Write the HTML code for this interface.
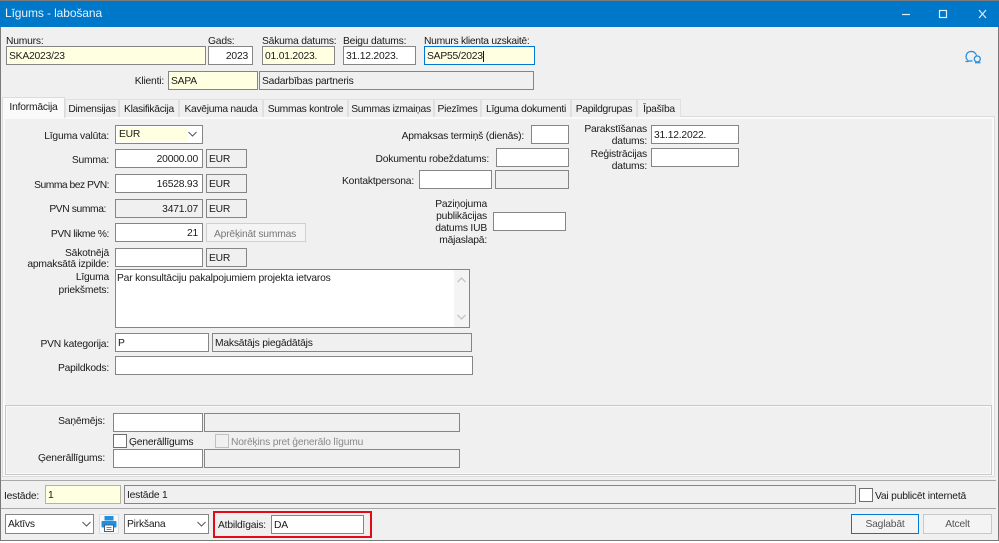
<!DOCTYPE html>
<html><head><meta charset="utf-8">
<style>
html,body{margin:0;padding:0;width:999px;height:543px;overflow:hidden;background:#fff}
body{position:relative;font:10.3px/15px "Liberation Sans",sans-serif;letter-spacing:-.2px;color:#1a1a1a}
div{position:absolute;box-sizing:border-box;white-space:nowrap}
.l{text-align:right}
.b{border:1px solid #858585;background:#fff;padding:3px 2px 1px;line-height:14px}
.g{background:#f0f0f0}
.y{background:#ffffe1}
.r{text-align:right;padding-right:4px}
.t{top:99px;height:18px;background:#f0f0f0;border:1px solid #e0e0e0;border-bottom:0;padding:2px 0 0 0;text-align:center;letter-spacing:-.3px}
.c{border:1px solid #6e6e6e;background:#fff;width:14px;height:14px}
</style></head><body>
<div style="left:0;top:0;width:999px;height:541px;background:#f0f0f0;border:1px solid #7a7a7a"></div>
<div style="left:0;top:0;width:999px;height:27px;background:#0078c9;border-top:1px solid #7a7a7a"></div>
<div style="left:5px;top:6px;color:#e6f2fb;font-size:12px;line-height:15px;letter-spacing:-.1px">Līgums - labošana</div>
<svg style="position:absolute;left:895px;top:5px" width="104" height="20" fill="none" stroke="#dcecf8" stroke-width="1.2">
<path d="M7 9.5h8"/><rect x="44.5" y="5.5" width="7" height="7"/><path d="M84 5l7 8M91 5l-7 8"/></svg>

<div style="left:6px;top:34px">Numurs:</div>
<div class="b y" style="left:6px;top:46px;width:200px;height:19px">SKA2023/23</div>
<div style="left:208px;top:34px">Gads:</div>
<div class="b r" style="left:208px;top:46px;width:45px;height:19px">2023</div>
<div style="left:262px;top:34px">Sākuma datums:</div>
<div class="b y" style="left:262px;top:46px;width:73px;height:19px">01.01.2023.</div>
<div style="left:343px;top:34px">Beigu datums:</div>
<div class="b" style="left:343px;top:46px;width:73px;height:19px">31.12.2023.</div>
<div style="left:424px;top:34px;letter-spacing:-.28px">Numurs klienta uzskaitē:</div>
<div class="b y" style="left:424px;top:46px;width:111px;height:19px;border-color:#0078d7;padding-left:2px">SAP55/2023<span style="border-left:1px solid #111"></span></div>
<div class="l" style="left:100px;width:64px;top:74px">Klienti:</div>
<div class="b y" style="left:168px;top:71px;width:90px;height:19px">SAPA</div>
<div class="b g" style="left:259px;top:71px;width:275px;height:19px">Sadarbības partneris</div>
<svg style="position:absolute;left:964px;top:48px" width="18" height="17" fill="none" stroke="#2b8fdc" stroke-width="1.3">
<path d="M4 12.5C2 11 1.8 8.5 2.5 6.5 3.5 3.5 8 2.5 10.5 4.5c1.2 1 1.8 2 1.9 3"/><path d="M1.5 13.5h2.5l.5-1"/><path d="M4.5 13h4"/><circle cx="13.3" cy="11" r="3"/><path d="M11 14.7h5.5"/></svg>

<!-- panel -->
<div style="left:2px;top:116px;width:993px;height:361px;background:#f0f0f0;border:1px solid #dcdcdc;box-shadow:inset 0 0 0 2px #fafafa"></div>
<div class="t" style="left:65px;width:54px">Dimensijas</div>
<div class="t" style="left:119px;width:60px">Klasifikācija</div>
<div class="t" style="left:179px;width:84px">Kavējuma nauda</div>
<div class="t" style="left:263px;width:85px">Summas kontrole</div>
<div class="t" style="left:348px;width:86px">Summas izmaiņas</div>
<div class="t" style="left:434px;width:47px">Piezīmes</div>
<div class="t" style="left:481px;width:90px">Līguma dokumenti</div>
<div class="t" style="left:571px;width:66px">Papildgrupas</div>
<div class="t" style="left:637px;width:44px">Īpašība</div>
<div style="left:2px;top:97px;width:63px;height:21px;background:#fafafa;border:1px solid #dcdcdc;border-bottom:0;padding:2px 0 0 0;text-align:center">Informācija</div>

<!-- left column -->
<div class="l" style="left:10px;width:99px;top:129px">Līguma valūta:</div>
<div class="b" style="left:115px;top:125px;width:88px;height:19px"><div class="y" style="left:1px;top:1px;width:70px;height:15px;padding:1px 0 0 2px;line-height:14px">EUR</div>
<svg style="position:absolute;left:71px;top:4px" width="12" height="9" fill="none" stroke="#555"><path d="M1.5 2l4 4 4-4"/></svg></div>
<div class="l" style="left:10px;width:99px;top:153px">Summa:</div>
<div class="b r" style="left:115px;top:149px;width:88px;height:19px">20000.00</div>
<div class="b g" style="left:206px;top:149px;width:41px;height:19px">EUR</div>
<div class="l" style="left:10px;width:99px;top:178px;letter-spacing:-.5px">Summa bez PVN:</div>
<div class="b r" style="left:115px;top:174px;width:88px;height:19px">16528.93</div>
<div class="b g" style="left:206px;top:174px;width:41px;height:19px">EUR</div>
<div class="l" style="left:10px;width:96px;top:202px;letter-spacing:-.4px">PVN summa:</div>
<div class="b r g" style="left:115px;top:199px;width:88px;height:19px">3471.07</div>
<div class="b g" style="left:206px;top:199px;width:41px;height:19px">EUR</div>
<div class="l" style="left:10px;width:99px;top:227px;letter-spacing:-.4px">PVN likme %:</div>
<div class="b r" style="left:115px;top:223px;width:88px;height:19px">21</div>
<div style="left:206px;top:223px;width:100px;height:19px;border:1px solid #d0d0d0;background:#f4f4f4;color:#777;padding:3px 0 0 7px">Aprēķināt summas</div>
<div class="l" style="left:10px;width:99px;top:246px">Sākotnējā</div>
<div class="l" style="left:10px;width:99px;top:257px">apmaksātā izpilde:</div>
<div class="b" style="left:115px;top:248px;width:88px;height:19px"></div>
<div class="b g" style="left:206px;top:248px;width:41px;height:19px">EUR</div>
<div class="l" style="left:10px;width:99px;top:270px">Līguma</div>
<div class="l" style="left:10px;width:99px;top:283px">priekšmets:</div>
<div class="b" style="left:115px;top:269px;width:355px;height:59px;padding:2px 1px"><div style="left:338px;top:0;width:15px;height:57px;background:#f4f4f4"></div>
<svg style="position:absolute;left:339px;top:3px" width="13" height="52" fill="none" stroke="#c4c4c4" stroke-width="1.3"><path d="M2.5 9l4-4 4 4M2.5 42l4 4 4-4"/></svg>Par konsultāciju pakalpojumiem projekta ietvaros</div>
<div class="l" style="left:10px;width:99px;top:337px">PVN kategorija:</div>
<div class="b" style="left:115px;top:333px;width:94px;height:19px">P</div>
<div class="b g" style="left:212px;top:333px;width:260px;height:19px">Maksātājs piegādātājs</div>
<div class="l" style="left:10px;width:99px;top:361px">Papildkods:</div>
<div class="b" style="left:115px;top:356px;width:358px;height:19px"></div>

<!-- right columns -->
<div class="l" style="left:380px;width:144px;top:129px">Apmaksas termiņš (dienās):</div>
<div class="b" style="left:531px;top:125px;width:38px;height:19px"></div>
<div class="l" style="left:350px;width:139px;top:152px">Dokumentu robeždatums:</div>
<div class="b" style="left:496px;top:148px;width:73px;height:19px"></div>
<div class="l" style="left:320px;width:94px;top:174px">Kontaktpersona:</div>
<div class="b" style="left:419px;top:170px;width:73px;height:19px"></div>
<div class="b g" style="left:495px;top:170px;width:74px;height:19px"></div>
<div class="l" style="left:410px;width:77px;top:197px">Paziņojuma</div>
<div class="l" style="left:410px;width:77px;top:209px">publikācijas</div>
<div class="l" style="left:410px;width:77px;top:221px">datums IUB</div>
<div class="l" style="left:410px;width:77px;top:233px">mājaslapā:</div>
<div class="b" style="left:493px;top:212px;width:73px;height:19px"></div>
<div class="l" style="left:570px;width:77px;top:122px">Parakstīšanas</div>
<div class="l" style="left:570px;width:77px;top:134px">datums:</div>
<div class="b" style="left:651px;top:125px;width:88px;height:19px">31.12.2022.</div>
<div class="l" style="left:570px;width:77px;top:147px">Reģistrācijas</div>
<div class="l" style="left:570px;width:77px;top:159px">datums:</div>
<div class="b" style="left:651px;top:148px;width:88px;height:19px"></div>

<!-- group -->
<div style="left:5px;top:405px;width:987px;height:70px;border:1px solid #c8c8c8;box-shadow:inset 0 0 0 1px #fafafa"></div>
<div class="l" style="left:10px;width:95px;top:414px">Saņēmējs:</div>
<div class="b" style="left:113px;top:413px;width:90px;height:19px"></div>
<div class="b g" style="left:204px;top:413px;width:256px;height:19px"></div>
<div class="c" style="left:113px;top:434px"></div>
<div style="left:129px;top:435px">Ģenerāllīgums</div>
<div class="c" style="left:215px;top:434px;border-color:#c0c0c0;background:#f0f0f0"></div>
<div style="left:231px;top:435px;color:#8a8a8a">Norēķins pret ģenerālo līgumu</div>
<div class="l" style="left:10px;width:95px;top:451px">Ģenerāllīgums:</div>
<div class="b" style="left:113px;top:449px;width:90px;height:19px"></div>
<div class="b g" style="left:204px;top:449px;width:256px;height:19px"></div>

<div style="left:1px;top:480px;width:995px;height:1px;background:#a8a8a8"></div>
<div style="left:4px;top:489px">Iestāde:</div>
<div class="b y" style="left:45px;top:485px;width:76px;height:19px;border-color:#b4b4a0">1</div>
<div class="b g" style="left:124px;top:485px;width:732px;height:19px">Iestāde 1</div>
<div class="c" style="left:859px;top:488px"></div>
<div style="left:875px;top:489px">Vai publicēt internetā</div>
<div style="left:1px;top:508px;width:995px;height:1px;background:#a8a8a8"></div>

<!-- bottom -->
<div class="b" style="left:5px;top:514px;width:89px;height:20px">Aktīvs
<svg style="position:absolute;left:75px;top:5px" width="12" height="9" fill="none" stroke="#555"><path d="M1.5 2l4 4 4-4"/></svg></div>
<div style="left:99px;top:514px;width:20px;height:20px;background:#f8f8f8;border:1px solid #dcdcdc"></div>
<svg style="position:absolute;left:101px;top:516px" width="16" height="16"><rect x="3.5" y="0" width="9" height="4.5" fill="#1f8fe0"/><rect x="0.5" y="5" width="15" height="6.5" rx="1" fill="#1f8fe0"/><rect x="3.5" y="9" width="9" height="6.5" fill="#fff" stroke="#44607a"/><path d="M5.5 11.5h5M5.5 13.5h5" stroke="#44607a" stroke-width=".8"/></svg>
<div class="b" style="left:124px;top:514px;width:85px;height:20px">Pirkšana
<svg style="position:absolute;left:71px;top:5px" width="12" height="9" fill="none" stroke="#555"><path d="M1.5 2l4 4 4-4"/></svg></div>
<div style="left:213px;top:511px;width:159px;height:27px;border:2px solid #e30b17"></div>
<div style="left:218px;top:518px">Atbildīgais:</div>
<div class="b" style="left:271px;top:515px;width:93px;height:19px">DA</div>
<div style="left:851px;top:514px;width:68px;height:20px;border:1px solid #0078d7;background:#f4f4f4;text-align:center;padding-top:2px;color:#555">Saglabāt</div>
<div style="left:923px;top:514px;width:69px;height:20px;border:1px solid #c8c8c8;background:#f4f4f4;text-align:center;padding-top:2px;color:#555">Atcelt</div>
</body></html>
